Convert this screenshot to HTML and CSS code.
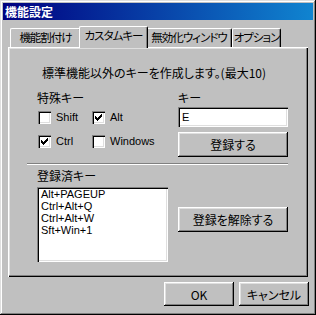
FILE: index.html
```html
<!DOCTYPE html>
<html lang="ja">
<head>
  <meta charset="UTF-8" />
  <title>機能設定</title>
  <link rel="stylesheet" href="styles.css">
</head>
<body>

  <div class="window">
    <div class="titlebar">機能設定</div>

    <div class="dialog">
      <div class="tabs">
        <div class="tab tab-assign">機能割付け</div>
        <div class="tab tab-custom active">カスタムキー</div>
        <div class="tab tab-disable">無効化ウィンドウ</div>
        <div class="tab tab-option">オプション</div>
      </div>

      <div class="panel">
        <p class="desc">標準機能以外のキーを作成します。(最大10)</p>

        <div class="section">
          <div class="col-left">
            <div class="label">特殊キー</div>
            <div class="checks">
              <div class="check"><span class="box"></span>Shift</div>
              <div class="check"><span class="box checked"><svg viewBox="0 0 13 13"><path d="M9 3h1v1h-1z M8 4h2v1h-2z M3 5h1v1h-1z M7 5h3v1h-3z M3 6h2v1h-2z M6 6h3v1h-3z M3 7h5v1h-5z M4 8h3v1h-3z M5 9h1v1h-1z"/></svg></span>Alt</div>
              <div class="check"><span class="box checked"><svg viewBox="0 0 13 13"><path d="M9 3h1v1h-1z M8 4h2v1h-2z M3 5h1v1h-1z M7 5h3v1h-3z M3 6h2v1h-2z M6 6h3v1h-3z M3 7h5v1h-5z M4 8h3v1h-3z M5 9h1v1h-1z"/></svg></span>Ctrl</div>
              <div class="check"><span class="box"></span>Windows</div>
            </div>
          </div>
          <div class="col-right">
            <div class="label">キー</div>
            <div class="field">E</div>
            <button class="btn btn-wide">登録する</button>
          </div>
        </div>

        <div class="separator"></div>

        <div class="section section-list">
          <div class="col-left">
            <div class="label">登録済キー</div>
            <ul class="listbox">
              <li>Alt+PAGEUP</li>
              <li>Ctrl+Alt+Q</li>
              <li>Ctrl+Alt+W</li>
              <li>Sft+Win+1</li>
            </ul>
          </div>
          <div class="col-right col-remove">
            <button class="btn btn-wide">登録を解除する</button>
          </div>
        </div>
      </div>

      <div class="actions">
        <button class="btn">OK</button>
        <button class="btn">キャンセル</button>
      </div>
    </div>
  </div>

</body>
</html>
```

FILE: styles.css
```css
* {
  margin: 0;
  padding: 0;
  box-sizing: border-box;
}

body {
  font-family: "Noto Sans CJK JP", sans-serif;
  font-size: 12px;
  font-feature-settings: "palt";
  color: #000;
  background: #c0c0c0;
}

.window {
  width: 316px;
  height: 315px;
  padding: 3px;
  background: #c0c0c0;
  box-shadow: inset -1px -1px #000, inset 1px 1px #dfdfdf,
              inset -2px -2px #808080, inset 2px 2px #fff;
}

.titlebar {
  height: 17px;
  line-height: 17px;
  padding-left: 2px;
  color: #fff;
  font-weight: bold;
  background: linear-gradient(90deg, #000080, #1084d0);
}

.dialog {
  padding: 0 4px 0 5px;
}

/* Tabs */
.tabs {
  display: flex;
  align-items: flex-end;
  height: 21px;
  margin-top: 6px;
  padding-left: 2px;
}

.tab {
  height: 19px;
  padding-top: 1px;
  font-size: 11.5px;
  letter-spacing: -1px;
  line-height: 15px;
  text-align: center;
  white-space: nowrap;
  background: #c0c0c0;
  border-top: 1px solid #fff;
  border-left: 1px solid #fff;
  border-right: 1px solid #000;
  border-radius: 2px 2px 0 0;
  box-shadow: inset -1px 0 #808080;
}

.tab-assign { width: 71px; }
.tab-custom { width: 65px; }
.tab-disable { width: 86px; }
.tab-option { width: 49px; }

.tab.active {
  position: relative;
  z-index: 1;
  height: 22px;
  width: 69px;
  margin: 0 -2px -1px;
}

/* Panel */
.panel {
  width: 300px;
  height: 230px;
  padding: 19px 20px 0 19px;
  box-shadow: inset 1px 1px #fff, inset -1px -1px #000,
              inset -2px -2px #808080, inset 2px 2px #dfdfdf;
}

.desc {
  margin-left: 15px;
  line-height: 14px;
}

.section {
  display: flex;
  margin-top: 11px;
}

.col-left {
  width: 141px;
  margin-left: 10px;
}

.col-right {
  width: 110px;
}

.label {
  line-height: 14px;
}

.checks {
  display: grid;
  grid-template-columns: 54px 54px;
  row-gap: 10px;
  margin: 5px 0 0 1px;
}

.check {
  display: flex;
  align-items: center;
  gap: 5px;
  height: 14px;
  font-family: "Liberation Sans", sans-serif;
  font-size: 11px;
  white-space: nowrap;
}

.box {
  width: 13px;
  height: 13px;
  flex: none;
  background: #fff;
  box-shadow: inset 1px 1px #808080, inset 2px 2px #000,
              inset -1px -1px #fff, inset -2px -2px #dfdfdf;
}

.box svg {
  display: block;
  width: 13px;
  height: 13px;
  fill: #000;
}

.field {
  height: 20px;
  margin-top: 2px;
  padding-left: 4px;
  line-height: 20px;
  font-family: "Liberation Sans", sans-serif;
  font-size: 11px;
  background: #fff;
  box-shadow: inset 1px 1px #808080, inset 2px 2px #000,
              inset -1px -1px #fff, inset -2px -2px #dfdfdf;
}

.btn {
  display: block;
  width: 70px;
  height: 24px;
  border: none;
  font: inherit;
  font-feature-settings: "palt";
  color: #000;
  background: #c0c0c0;
  box-shadow: inset -1px -1px #000, inset 1px 1px #fff,
              inset -2px -2px #808080, inset 2px 2px #dfdfdf;
}

.btn-wide {
  width: 110px;
  height: 25px;
  margin-top: 5px;
}

.separator {
  margin-top: 6px;
  border-top: 1px solid #808080;
  border-bottom: 1px solid #fff;
}

.section-list {
  margin-top: 4px;
}

.listbox {
  list-style: none;
  width: 131px;
  height: 75px;
  margin-top: 4px;
  padding: 1px 4px;
  font-family: "Liberation Sans", sans-serif;
  font-size: 11px;
  line-height: 12px;
  background: #fff;
  box-shadow: inset 1px 1px #808080, inset 2px 2px #000,
              inset -1px -1px #fff, inset -2px -2px #dfdfdf;
}

.col-remove {
  padding-top: 33px;
}

/* Bottom buttons */
.actions {
  display: flex;
  justify-content: flex-end;
  gap: 5px;
  margin-top: 5px;
}
```
